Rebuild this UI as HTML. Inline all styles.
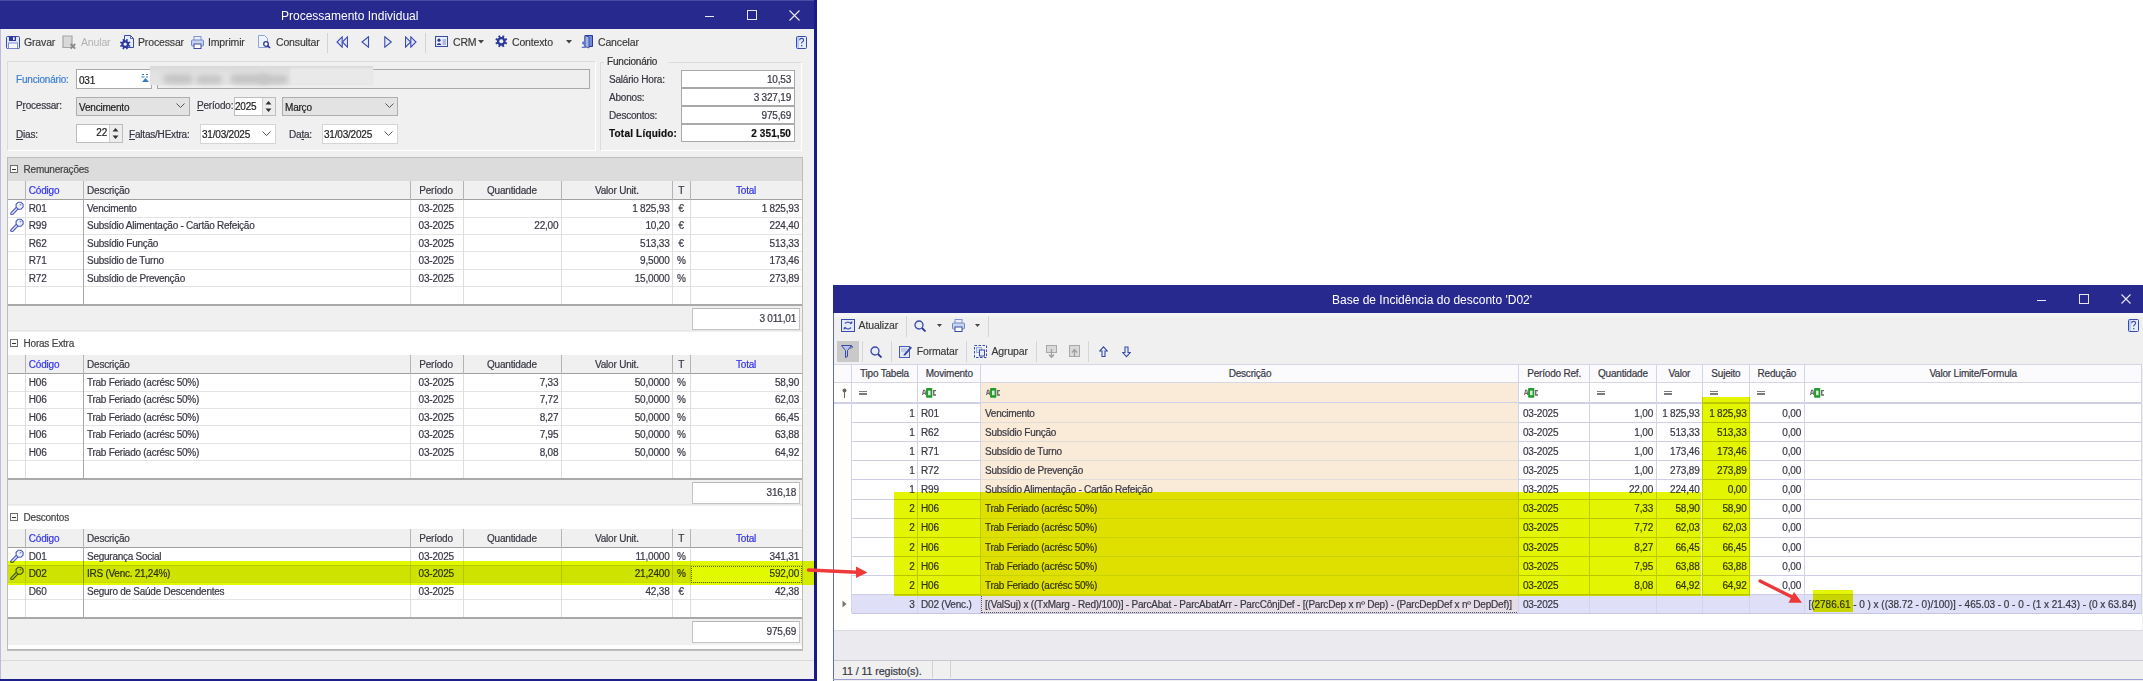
<!DOCTYPE html><html><head><meta charset="utf-8"><style>
html,body{margin:0;padding:0}
body{width:2143px;height:681px;overflow:hidden;background:#fff;position:relative;font-family:"Liberation Sans",sans-serif;}
div,span,svg{position:absolute;box-sizing:border-box}
.t{font-size:10px;letter-spacing:-0.2px;color:#383844;white-space:nowrap;line-height:12px;-webkit-text-stroke-width:0.2px}
.tb{font-size:10.5px;letter-spacing:-0.15px;color:#383838;white-space:nowrap;line-height:12px;-webkit-text-stroke-width:0.15px}
.r{text-align:right}
.c{text-align:center}
.ttl{font-size:12px;color:#fff;white-space:nowrap;line-height:14px}
</style></head><body><div style="left:0px;top:0px;width:817px;height:681px;background:#f0f0f0"></div>
<div style="left:0px;top:29px;width:1px;height:652px;background:#bcbce0"></div>
<div style="left:814px;top:0px;width:3px;height:681px;background:#1a1a8a"></div>
<div style="left:0px;top:679px;width:817px;height:2px;background:#1f1f8c"></div>
<div style="left:0px;top:0px;width:814px;height:29px;background:#28298f"></div>
<div style="left:0px;top:0px;width:814px;height:1px;background:#4b4ca6"></div>
<span class="ttl" style="left:281px;top:8.84px;">Processamento Individual</span>
<div style="left:705px;top:16px;width:9px;height:1px;background:#e8e8f5"></div>
<div style="left:747px;top:10px;width:10px;height:10px;border:1px solid #e8e8f5"></div>
<svg style="left:789px;top:10px" width="11" height="11" viewBox="0 0 11 11"><path d="M0.5 0.5L10.5 10.5M10.5 0.5L0.5 10.5" stroke="#ececf7" stroke-width="1.1"/></svg>
<svg style="left:6px;top:36px" width="14" height="13" viewBox="0 0 14 13"><rect x="0.5" y="0.5" width="13" height="12" rx="1" fill="#dfe8f7" stroke="#3a4aa8"/><rect x="3" y="0.5" width="7" height="4.5" fill="#2b3a9a"/><rect x="7" y="1.3" width="1.6" height="2.6" fill="#fff"/><rect x="2.5" y="7" width="9" height="5.5" fill="#f5f8ff" stroke="#6a7cc8" stroke-width="0.8"/></svg>
<span class="tb" style="left:24px;top:35.86px;">Gravar</span>
<svg style="left:62px;top:35px" width="14" height="15" viewBox="0 0 14 15"><path d="M1 1h9v11.5H1z" fill="#d8d8d8" stroke="#a6a6a6" stroke-width="1.2"/><path d="M8.6 9L13.2 13.6M13.2 9L8.6 13.6" stroke="#8a8a8a" stroke-width="1.8"/></svg>
<span class="tb" style="left:81px;top:35.86px;color:#b2b2b2;-webkit-text-stroke-width:0">Anular</span>
<svg style="left:120px;top:35px" width="15" height="15" viewBox="0 0 15 15"><path d="M4.5 0.5h6l3 3v9h-9z" fill="#e9eefb" stroke="#3a4aa8" stroke-width="1"/><path d="M10.5 0.5v3h3" fill="none" stroke="#3a4aa8" stroke-width="0.8"/><path d="M9.04 9.89L10.45 10.46L9.80 12.02L8.40 11.43L7.43 12.40L8.02 13.80L6.46 14.45L5.89 13.04L4.51 13.04L3.94 14.45L2.38 13.80L2.97 12.40L2.00 11.43L0.60 12.02L-0.05 10.46L1.36 9.89L1.36 8.51L-0.05 7.94L0.60 6.38L2.00 6.97L2.97 6.00L2.38 4.60L3.94 3.95L4.51 5.36L5.89 5.36L6.46 3.95L8.02 4.60L7.43 6.00L8.40 6.97L9.80 6.38L10.45 7.94L9.04 8.51Z" fill="#2b3a9a"/><circle cx="5.2" cy="9.2" r="1.6" fill="#e9eefb"/></svg>
<span class="tb" style="left:138px;top:35.86px;">Processar</span>
<svg style="left:191px;top:36px" width="13" height="13" viewBox="0 0 13 13"><rect x="3" y="0.5" width="7" height="4" fill="#e8eefa" stroke="#8094d0"/><rect x="0.5" y="4" width="12" height="6" rx="1" fill="#c6d4f0" stroke="#7088c8"/><rect x="3" y="8" width="7" height="4.5" fill="#fff" stroke="#3a4aa8"/></svg>
<span class="tb" style="left:208px;top:35.86px;">Imprimir</span>
<svg style="left:258px;top:35px" width="13" height="14" viewBox="0 0 13 14"><path d="M0.5 0.5h6l3 3v9h-9z" fill="#eef3fc" stroke="#8ea4d8"/><circle cx="8" cy="9" r="2.3" fill="#fff" stroke="#2b3a9a" stroke-width="1.3"/><path d="M9.6 10.6L12 13" stroke="#2b3a9a" stroke-width="1.6"/></svg>
<span class="tb" style="left:276px;top:35.86px;">Consultar</span>
<div style="left:327px;top:33px;width:1px;height:20px;background:#d3d3d3"></div>
<svg style="left:336px;top:36px" width="12" height="12" viewBox="0 0 12 12"><path d="M6.2 0.8L1 6L6.2 11.2Z" fill="#dfe5f7" stroke="#3b4bb0" stroke-width="1.1"/><path d="M11.5 0.8L6.3 6L11.5 11.2Z" fill="#dfe5f7" stroke="#3b4bb0" stroke-width="1.1"/></svg>
<svg style="left:361px;top:36px" width="9" height="12" viewBox="0 0 9 12"><path d="M7.5 0.8L1 6L7.5 11.2Z" fill="#e6ebf8" stroke="#3b4bb0" stroke-width="1.1"/></svg>
<svg style="left:384px;top:36px" width="9" height="12" viewBox="0 0 9 12"><path d="M0.8 0.8L7.3 6L0.8 11.2Z" fill="#e6ebf8" stroke="#3b4bb0" stroke-width="1.1"/></svg>
<svg style="left:405px;top:36px" width="12" height="12" viewBox="0 0 12 12"><path d="M0.5 0.8L5.7 6L0.5 11.2Z" fill="#dfe5f7" stroke="#3b4bb0" stroke-width="1.1"/><path d="M5.8 0.8L11 6L5.8 11.2Z" fill="#dfe5f7" stroke="#3b4bb0" stroke-width="1.1"/></svg>
<div style="left:425px;top:33px;width:1px;height:20px;background:#d3d3d3"></div>
<svg style="left:435px;top:36px" width="13" height="12" viewBox="0 0 13 12"><rect x="0.5" y="0.5" width="12" height="10" fill="#e9eefa" stroke="#3a4aa8"/><circle cx="4" cy="4.2" r="1.6" fill="#2b3a9a"/><path d="M1.8 9c0.5-2.2 4-2.2 4.5 0z" fill="#2b3a9a"/><path d="M7.5 4h3.5M7.5 6h3.5M7.5 8h3.5" stroke="#6a7cc8" stroke-width="0.9"/></svg>
<span class="tb" style="left:453px;top:35.86px;">CRM</span>
<svg style="left:478px;top:40px" width="6" height="4" viewBox="0 0 6 4"><path d="M0 0h6L3 3.5z" fill="#444"/></svg>
<svg style="left:495px;top:35px" width="13" height="13" viewBox="0 0 13 13"><path d="M10.63 7.07L12.23 7.72L11.50 9.49L9.91 8.82L8.82 9.91L9.49 11.50L7.72 12.23L7.07 10.63L5.53 10.63L4.88 12.23L3.11 11.50L3.78 9.91L2.69 8.82L1.10 9.49L0.37 7.72L1.97 7.07L1.97 5.53L0.37 4.88L1.10 3.11L2.69 3.78L3.78 2.69L3.11 1.10L4.88 0.37L5.53 1.97L7.07 1.97L7.72 0.37L9.49 1.10L8.82 2.69L9.91 3.78L11.50 3.11L12.23 4.88L10.63 5.53Z" fill="#2b3a9a"/><circle cx="6.3" cy="6.3" r="2" fill="#f0f0f0"/></svg>
<span class="tb" style="left:512px;top:35.86px;">Contexto</span>
<svg style="left:566px;top:40px" width="6" height="4" viewBox="0 0 6 4"><path d="M0 0h6L3 3.5z" fill="#444"/></svg>
<svg style="left:581px;top:35px" width="12" height="14" viewBox="0 0 12 14"><path d="M4 0.5h7.5v11h-7.5z" fill="#6f8ad6" stroke="#2b3a9a"/><path d="M4 0.5l4 1.5v11l-4-1.5z" fill="#9fb3e8" stroke="#2b3a9a" stroke-width="0.8"/><circle cx="2.8" cy="8" r="1.8" fill="#5d78c8"/><path d="M0.5 13c0-2 4.5-2 4.5 0z" fill="#5d78c8"/></svg>
<span class="tb" style="left:598px;top:35.86px;">Cancelar</span>
<svg style="left:796px;top:36px" width="11" height="13" viewBox="0 0 11 13"><rect x="0.5" y="0.5" width="10" height="12" rx="1" fill="#e6ecfa" stroke="#3a4aa8"/><rect x="1" y="1" width="2" height="11" fill="#b9c9ee"/><path d="M3.6 4.2c0-2.4 4-2.4 4 0c0 1.4-2 1.4-2 3.2" fill="none" stroke="#3a4aa8" stroke-width="1.1"/><rect x="5.1" y="9" width="1.2" height="1.3" fill="#3a4aa8"/></svg>
<div style="left:7px;top:61px;width:589px;height:90px;border:1px solid #dcdcdc;border-right-color:#fff;border-bottom-color:#fff"></div>
<span class="t" style="left:16px;top:73.93px;color:#3d7fd6">Funcionário:</span>
<div style="left:76px;top:69px;width:76px;height:20px;background:#fff;border:1px solid #a9a9a9"></div>
<span class="t" style="left:79px;top:74.83px;color:#222">031</span>
<svg style="left:141px;top:74px" width="8" height="9" viewBox="0 0 8 9"><path d="M1 0.5h2M0.5 3h3M5 0.5h2M5 3h2" stroke="#3a78c8" stroke-width="1"/><path d="M1 8h7L4.5 4z" fill="#3a78c8"/></svg>
<div style="left:157px;top:69px;width:433px;height:20px;background:#eeeeee;border:1px solid #a9a9a9"></div>
<div style="left:150px;top:66px;width:223px;height:19px;background:linear-gradient(180deg,#d9d9d9 0%,#e2e2e2 40%,#e4e4e4 100%);filter:blur(0.6px)"></div>
<div style="left:290px;top:68px;width:83px;height:17px;background:#e9e9e9;filter:blur(1px)"></div>
<div style="left:163px;top:74px;width:30px;height:10px;background:#c6c6c6;border-radius:5px;filter:blur(2.5px)"></div>
<div style="left:196px;top:75px;width:26px;height:9px;background:#c6c6c6;border-radius:5px;filter:blur(2.5px)"></div>
<div style="left:230px;top:74px;width:40px;height:10px;background:#c6c6c6;border-radius:5px;filter:blur(2.5px)"></div>
<div style="left:258px;top:75px;width:30px;height:9px;background:#c6c6c6;border-radius:5px;filter:blur(2.5px)"></div>
<span class="t" style="left:16px;top:100.03px;">P<u>r</u>ocessar:</span>
<div style="left:76px;top:97px;width:114px;height:19px;background:#e3e3e3;border:1px solid #aeaeae"></div>
<span class="t" style="left:79px;top:102.13px;color:#222">Vencimento</span>
<svg style="left:176px;top:103px" width="9" height="6" viewBox="0 0 9 6"><path d="M0.5 0.5L4.5 4.5L8.5 0.5" fill="none" stroke="#555" stroke-width="1"/></svg>
<span class="t" style="left:197px;top:100.03px;"><u>P</u>eríodo:</span>
<div style="left:234px;top:97px;width:42px;height:19px;background:#fff;border:1px solid #bdbdbd"></div>
<span class="t" style="left:235px;top:100.73px;color:#222">2025</span>
<div style="left:262px;top:98px;width:13px;height:17px;background:#ededed;border-left:1px solid #cfcfcf"></div>
<svg style="left:265px;top:100px" width="7" height="13" viewBox="0 0 7 13"><path d="M0.5 4.5h6L3.5 1z M0.5 8.5h6L3.5 12z" fill="#333"/></svg>
<div style="left:282px;top:97px;width:116px;height:19px;background:#e3e3e3;border:1px solid #aeaeae"></div>
<span class="t" style="left:285px;top:102.13px;color:#222">Março</span>
<svg style="left:385px;top:103px" width="9" height="6" viewBox="0 0 9 6"><path d="M0.5 0.5L4.5 4.5L8.5 0.5" fill="none" stroke="#555" stroke-width="1"/></svg>
<span class="t" style="left:16px;top:129.03px;"><u>D</u>ias:</span>
<div style="left:76px;top:124px;width:47px;height:19px;background:#fff;border:1px solid #bdbdbd"></div>
<span class="t r" style="right:2036px;top:127.33px;color:#222">22</span>
<div style="left:109px;top:125px;width:13px;height:17px;background:#ededed;border-left:1px solid #cfcfcf"></div>
<svg style="left:112px;top:127px" width="7" height="13" viewBox="0 0 7 13"><path d="M0.5 4.5h6L3.5 1z M0.5 8.5h6L3.5 12z" fill="#333"/></svg>
<span class="t" style="left:129px;top:129.03px;"><u>F</u>altas/HExtra:</span>
<div style="left:200px;top:124px;width:76px;height:20px;background:#fff;border:1px solid #d5d5d5"></div>
<span class="t" style="left:202px;top:129.03px;color:#222">31/03/2025</span>
<svg style="left:262px;top:131px" width="9" height="6" viewBox="0 0 9 6"><path d="M0.5 0.5L4.5 4.5L8.5 0.5" fill="none" stroke="#555" stroke-width="1"/></svg>
<span class="t" style="left:289px;top:129.03px;">Da<u>t</u>a:</span>
<div style="left:322px;top:124px;width:76px;height:20px;background:#fff;border:1px solid #d5d5d5"></div>
<span class="t" style="left:324px;top:129.03px;color:#222">31/03/2025</span>
<svg style="left:384px;top:131px" width="9" height="6" viewBox="0 0 9 6"><path d="M0.5 0.5L4.5 4.5L8.5 0.5" fill="none" stroke="#555" stroke-width="1"/></svg>
<div style="left:600px;top:62px;width:202px;height:89px;border:1px solid #dcdcdc;border-right-color:#fff;border-bottom-color:#fff"></div>
<div style="left:604px;top:56px;width:64px;height:10px;background:#f0f0f0"></div>
<span class="t" style="left:607px;top:55.53px;color:#333">Funcionário</span>
<div style="left:681px;top:70px;width:114px;height:18px;background:#fff;border:1px solid #a9a9a9"></div>
<span class="t" style="left:609px;top:73.93px;">Salário Hora:</span>
<span class="t r" style="right:1352px;top:73.93px;">10,53</span>
<div style="left:681px;top:88px;width:114px;height:18px;background:#fff;border:1px solid #a9a9a9"></div>
<span class="t" style="left:609px;top:92.03px;">Abonos:</span>
<span class="t r" style="right:1352px;top:92.03px;">3 327,19</span>
<div style="left:681px;top:106px;width:114px;height:18px;background:#fff;border:1px solid #a9a9a9"></div>
<span class="t" style="left:609px;top:110.13px;">Descontos:</span>
<span class="t r" style="right:1352px;top:110.13px;">975,69</span>
<div style="left:681px;top:124px;width:114px;height:18px;background:#fff;border:1px solid #a9a9a9"></div>
<span class="t" style="left:609px;top:128.23px;font-weight:bold;color:#111;letter-spacing:0.2px">Total Líquido:</span>
<span class="t r" style="right:1352px;top:128.23px;font-weight:bold;color:#111;letter-spacing:0.1px">2 351,50</span>
<div style="left:7px;top:157px;width:796px;height:494px;background:#f0f0f0;border:1px solid #bdbdbd"></div>
<div style="left:8px;top:158px;width:794px;height:23px;background:#dcdcdc"></div>
<div style="left:10px;top:165px;width:8px;height:8px;border:1px solid #6e6e6e;background:#f8f8f8"></div>
<div style="left:12px;top:168.5px;width:4px;height:1px;background:#333"></div>
<span class="t" style="left:23.5px;top:164.23px;color:#444">Remunerações</span>
<div style="left:8px;top:181px;width:794px;height:18.5px;background:#f0f0f0;border-bottom:1px solid #a0a0a0"></div>
<div style="left:25px;top:181px;width:1px;height:18.5px;background:#b4b4b4"></div>
<div style="left:83px;top:181px;width:1px;height:18.5px;background:#b4b4b4"></div>
<div style="left:409.5px;top:181px;width:1px;height:18.5px;background:#b4b4b4"></div>
<div style="left:462.5px;top:181px;width:1px;height:18.5px;background:#b4b4b4"></div>
<div style="left:561.3px;top:181px;width:1px;height:18.5px;background:#b4b4b4"></div>
<div style="left:672.4px;top:181px;width:1px;height:18.5px;background:#b4b4b4"></div>
<div style="left:690.2px;top:181px;width:1px;height:18.5px;background:#b4b4b4"></div>
<span class="t" style="left:28.8px;top:184.83px;color:#3333ee">Código</span>
<span class="t" style="left:87px;top:184.83px;">Descrição</span>
<span class="t c" style="left:409.5px;width:53.0px;top:184.83px;">Período</span>
<span class="t c" style="left:462.5px;width:98.79999999999995px;top:184.83px;">Quantidade</span>
<span class="t c" style="left:561.3px;width:111.10000000000002px;top:184.83px;">Valor Unit.</span>
<span class="t c" style="left:672.4px;width:17.800000000000068px;top:184.83px;">T</span>
<span class="t c" style="left:690.2px;width:111.79999999999995px;top:184.83px;color:#3333ee">Total</span>
<div style="left:8px;top:199.5px;width:794px;height:104.39999999999999px;background:#fff"></div>
<div style="left:8px;top:217px;width:794px;height:1px;background:#e3e3e3"></div>
<div style="left:8px;top:234px;width:794px;height:1px;background:#e3e3e3"></div>
<div style="left:8px;top:251px;width:794px;height:1px;background:#e3e3e3"></div>
<div style="left:8px;top:269px;width:794px;height:1px;background:#e3e3e3"></div>
<div style="left:8px;top:286px;width:794px;height:1px;background:#e3e3e3"></div>
<div style="left:25px;top:199.5px;width:1px;height:104.39999999999999px;background:#dedede"></div>
<div style="left:83px;top:199.5px;width:1px;height:104.39999999999999px;background:#a8a8a8"></div>
<div style="left:409.5px;top:199.5px;width:1px;height:104.39999999999999px;background:#dedede"></div>
<div style="left:462.5px;top:199.5px;width:1px;height:104.39999999999999px;background:#dedede"></div>
<div style="left:561.3px;top:199.5px;width:1px;height:104.39999999999999px;background:#dedede"></div>
<div style="left:672.4px;top:199.5px;width:1px;height:104.39999999999999px;background:#dedede"></div>
<div style="left:690.2px;top:199.5px;width:1px;height:104.39999999999999px;background:#dedede"></div>
<svg style="left:10px;top:201px" width="14" height="14" viewBox="0 0 14 14"><path d="M6.8 7.6L2 12.4" stroke="#4a58bf" stroke-width="3.6" stroke-linecap="round"/><path d="M6.8 7.6L2 12.4" stroke="#dfe5f7" stroke-width="1.4" stroke-linecap="round"/><path d="M8.2 1.2h2.8l2.1 2.1v2.8l-2.1 2.1h-2.8l-2.1-2.1v-2.8z" fill="#eef1fb" stroke="#4a58bf" stroke-width="1.1"/><circle cx="10.5" cy="3.6" r="0.9" fill="#7d8bd6"/></svg>
<span class="t" style="left:28.8px;top:203.03px;">R01</span>
<span class="t" style="left:87px;top:203.03px;letter-spacing:-0.26px">Vencimento</span>
<span class="t" style="left:418.6px;top:203.03px;">03-2025</span>
<span class="t r" style="right:1473.5px;top:203.03px;">1 825,93</span>
<span class="t c" style="left:672.4px;width:17.800000000000068px;top:203.03px;">€</span>
<span class="t r" style="right:1344px;top:203.03px;">1 825,93</span>
<svg style="left:10px;top:218px" width="14" height="14" viewBox="0 0 14 14"><path d="M6.8 7.6L2 12.4" stroke="#4a58bf" stroke-width="3.6" stroke-linecap="round"/><path d="M6.8 7.6L2 12.4" stroke="#dfe5f7" stroke-width="1.4" stroke-linecap="round"/><path d="M8.2 1.2h2.8l2.1 2.1v2.8l-2.1 2.1h-2.8l-2.1-2.1v-2.8z" fill="#eef1fb" stroke="#4a58bf" stroke-width="1.1"/><circle cx="10.5" cy="3.6" r="0.9" fill="#7d8bd6"/></svg>
<span class="t" style="left:28.8px;top:220.43px;">R99</span>
<span class="t" style="left:87px;top:220.43px;letter-spacing:-0.26px">Subsídio Alimentação - Cartão Refeição</span>
<span class="t" style="left:418.6px;top:220.43px;">03-2025</span>
<span class="t r" style="right:1584.7px;top:220.43px;">22,00</span>
<span class="t r" style="right:1473.5px;top:220.43px;">10,20</span>
<span class="t c" style="left:672.4px;width:17.800000000000068px;top:220.43px;">€</span>
<span class="t r" style="right:1344px;top:220.43px;">224,40</span>
<span class="t" style="left:28.8px;top:237.83px;">R62</span>
<span class="t" style="left:87px;top:237.83px;letter-spacing:-0.26px">Subsídio Função</span>
<span class="t" style="left:418.6px;top:237.83px;">03-2025</span>
<span class="t r" style="right:1473.5px;top:237.83px;">513,33</span>
<span class="t c" style="left:672.4px;width:17.800000000000068px;top:237.83px;">€</span>
<span class="t r" style="right:1344px;top:237.83px;">513,33</span>
<span class="t" style="left:28.8px;top:255.23px;">R71</span>
<span class="t" style="left:87px;top:255.23px;letter-spacing:-0.26px">Subsídio de Turno</span>
<span class="t" style="left:418.6px;top:255.23px;">03-2025</span>
<span class="t r" style="right:1473.5px;top:255.23px;">9,5000</span>
<span class="t c" style="left:672.4px;width:17.800000000000068px;top:255.23px;">%</span>
<span class="t r" style="right:1344px;top:255.23px;">173,46</span>
<span class="t" style="left:28.8px;top:272.63px;">R72</span>
<span class="t" style="left:87px;top:272.63px;letter-spacing:-0.26px">Subsídio de Prevenção</span>
<span class="t" style="left:418.6px;top:272.63px;">03-2025</span>
<span class="t r" style="right:1473.5px;top:272.63px;">15,0000</span>
<span class="t c" style="left:672.4px;width:17.800000000000068px;top:272.63px;">%</span>
<span class="t r" style="right:1344px;top:272.63px;">273,89</span>
<div style="left:8px;top:304px;width:794px;height:2px;background:#a9a9a9"></div>
<div style="left:692px;top:307.9px;width:108px;height:22px;background:#fff;border:1px solid #c4c4c4;border-top-color:#b8b8b8"></div>
<span class="t r" style="right:1347px;top:312.93px;">3 011,01</span>
<div style="left:8px;top:330px;width:794px;height:1px;background:#e6e6e6"></div>
<div style="left:8px;top:332px;width:794px;height:23px;background:#ffffff"></div>
<div style="left:10px;top:339px;width:8px;height:8px;border:1px solid #6e6e6e;background:#f8f8f8"></div>
<div style="left:12px;top:342.5px;width:4px;height:1px;background:#333"></div>
<span class="t" style="left:23.5px;top:338.23px;color:#444">Horas Extra</span>
<div style="left:8px;top:355px;width:794px;height:18.5px;background:#f0f0f0;border-bottom:1px solid #a0a0a0"></div>
<div style="left:25px;top:355px;width:1px;height:18.5px;background:#b4b4b4"></div>
<div style="left:83px;top:355px;width:1px;height:18.5px;background:#b4b4b4"></div>
<div style="left:409.5px;top:355px;width:1px;height:18.5px;background:#b4b4b4"></div>
<div style="left:462.5px;top:355px;width:1px;height:18.5px;background:#b4b4b4"></div>
<div style="left:561.3px;top:355px;width:1px;height:18.5px;background:#b4b4b4"></div>
<div style="left:672.4px;top:355px;width:1px;height:18.5px;background:#b4b4b4"></div>
<div style="left:690.2px;top:355px;width:1px;height:18.5px;background:#b4b4b4"></div>
<span class="t" style="left:28.8px;top:358.83px;color:#3333ee">Código</span>
<span class="t" style="left:87px;top:358.83px;">Descrição</span>
<span class="t c" style="left:409.5px;width:53.0px;top:358.83px;">Período</span>
<span class="t c" style="left:462.5px;width:98.79999999999995px;top:358.83px;">Quantidade</span>
<span class="t c" style="left:561.3px;width:111.10000000000002px;top:358.83px;">Valor Unit.</span>
<span class="t c" style="left:672.4px;width:17.800000000000068px;top:358.83px;">T</span>
<span class="t c" style="left:690.2px;width:111.79999999999995px;top:358.83px;color:#3333ee">Total</span>
<div style="left:8px;top:373.5px;width:794px;height:104.39999999999999px;background:#fff"></div>
<div style="left:8px;top:391px;width:794px;height:1px;background:#e3e3e3"></div>
<div style="left:8px;top:408px;width:794px;height:1px;background:#e3e3e3"></div>
<div style="left:8px;top:425px;width:794px;height:1px;background:#e3e3e3"></div>
<div style="left:8px;top:443px;width:794px;height:1px;background:#e3e3e3"></div>
<div style="left:8px;top:460px;width:794px;height:1px;background:#e3e3e3"></div>
<div style="left:25px;top:373.5px;width:1px;height:104.39999999999999px;background:#dedede"></div>
<div style="left:83px;top:373.5px;width:1px;height:104.39999999999999px;background:#a8a8a8"></div>
<div style="left:409.5px;top:373.5px;width:1px;height:104.39999999999999px;background:#dedede"></div>
<div style="left:462.5px;top:373.5px;width:1px;height:104.39999999999999px;background:#dedede"></div>
<div style="left:561.3px;top:373.5px;width:1px;height:104.39999999999999px;background:#dedede"></div>
<div style="left:672.4px;top:373.5px;width:1px;height:104.39999999999999px;background:#dedede"></div>
<div style="left:690.2px;top:373.5px;width:1px;height:104.39999999999999px;background:#dedede"></div>
<span class="t" style="left:28.8px;top:377.03px;">H06</span>
<span class="t" style="left:87px;top:377.03px;letter-spacing:-0.26px">Trab Feriado (acrésc 50%)</span>
<span class="t" style="left:418.6px;top:377.03px;">03-2025</span>
<span class="t r" style="right:1584.7px;top:377.03px;">7,33</span>
<span class="t r" style="right:1473.5px;top:377.03px;">50,0000</span>
<span class="t c" style="left:672.4px;width:17.800000000000068px;top:377.03px;">%</span>
<span class="t r" style="right:1344px;top:377.03px;">58,90</span>
<span class="t" style="left:28.8px;top:394.43px;">H06</span>
<span class="t" style="left:87px;top:394.43px;letter-spacing:-0.26px">Trab Feriado (acrésc 50%)</span>
<span class="t" style="left:418.6px;top:394.43px;">03-2025</span>
<span class="t r" style="right:1584.7px;top:394.43px;">7,72</span>
<span class="t r" style="right:1473.5px;top:394.43px;">50,0000</span>
<span class="t c" style="left:672.4px;width:17.800000000000068px;top:394.43px;">%</span>
<span class="t r" style="right:1344px;top:394.43px;">62,03</span>
<span class="t" style="left:28.8px;top:411.83px;">H06</span>
<span class="t" style="left:87px;top:411.83px;letter-spacing:-0.26px">Trab Feriado (acrésc 50%)</span>
<span class="t" style="left:418.6px;top:411.83px;">03-2025</span>
<span class="t r" style="right:1584.7px;top:411.83px;">8,27</span>
<span class="t r" style="right:1473.5px;top:411.83px;">50,0000</span>
<span class="t c" style="left:672.4px;width:17.800000000000068px;top:411.83px;">%</span>
<span class="t r" style="right:1344px;top:411.83px;">66,45</span>
<span class="t" style="left:28.8px;top:429.23px;">H06</span>
<span class="t" style="left:87px;top:429.23px;letter-spacing:-0.26px">Trab Feriado (acrésc 50%)</span>
<span class="t" style="left:418.6px;top:429.23px;">03-2025</span>
<span class="t r" style="right:1584.7px;top:429.23px;">7,95</span>
<span class="t r" style="right:1473.5px;top:429.23px;">50,0000</span>
<span class="t c" style="left:672.4px;width:17.800000000000068px;top:429.23px;">%</span>
<span class="t r" style="right:1344px;top:429.23px;">63,88</span>
<span class="t" style="left:28.8px;top:446.63px;">H06</span>
<span class="t" style="left:87px;top:446.63px;letter-spacing:-0.26px">Trab Feriado (acrésc 50%)</span>
<span class="t" style="left:418.6px;top:446.63px;">03-2025</span>
<span class="t r" style="right:1584.7px;top:446.63px;">8,08</span>
<span class="t r" style="right:1473.5px;top:446.63px;">50,0000</span>
<span class="t c" style="left:672.4px;width:17.800000000000068px;top:446.63px;">%</span>
<span class="t r" style="right:1344px;top:446.63px;">64,92</span>
<div style="left:8px;top:478px;width:794px;height:2px;background:#a9a9a9"></div>
<div style="left:692px;top:481.9px;width:108px;height:22px;background:#fff;border:1px solid #c4c4c4;border-top-color:#b8b8b8"></div>
<span class="t r" style="right:1347px;top:486.93px;">316,18</span>
<div style="left:8px;top:504px;width:794px;height:1px;background:#e6e6e6"></div>
<div style="left:8px;top:506px;width:794px;height:23px;background:#ffffff"></div>
<div style="left:10px;top:513px;width:8px;height:8px;border:1px solid #6e6e6e;background:#f8f8f8"></div>
<div style="left:12px;top:516.5px;width:4px;height:1px;background:#333"></div>
<span class="t" style="left:23.5px;top:512.23px;color:#444">Descontos</span>
<div style="left:8px;top:529px;width:794px;height:18.5px;background:#f0f0f0;border-bottom:1px solid #a0a0a0"></div>
<div style="left:25px;top:529px;width:1px;height:18.5px;background:#b4b4b4"></div>
<div style="left:83px;top:529px;width:1px;height:18.5px;background:#b4b4b4"></div>
<div style="left:409.5px;top:529px;width:1px;height:18.5px;background:#b4b4b4"></div>
<div style="left:462.5px;top:529px;width:1px;height:18.5px;background:#b4b4b4"></div>
<div style="left:561.3px;top:529px;width:1px;height:18.5px;background:#b4b4b4"></div>
<div style="left:672.4px;top:529px;width:1px;height:18.5px;background:#b4b4b4"></div>
<div style="left:690.2px;top:529px;width:1px;height:18.5px;background:#b4b4b4"></div>
<span class="t" style="left:28.8px;top:532.83px;color:#3333ee">Código</span>
<span class="t" style="left:87px;top:532.83px;">Descrição</span>
<span class="t c" style="left:409.5px;width:53.0px;top:532.83px;">Período</span>
<span class="t c" style="left:462.5px;width:98.79999999999995px;top:532.83px;">Quantidade</span>
<span class="t c" style="left:561.3px;width:111.10000000000002px;top:532.83px;">Valor Unit.</span>
<span class="t c" style="left:672.4px;width:17.800000000000068px;top:532.83px;">T</span>
<span class="t c" style="left:690.2px;width:111.79999999999995px;top:532.83px;color:#3333ee">Total</span>
<div style="left:8px;top:547.5px;width:794px;height:69.6px;background:#fff"></div>
<div style="left:8px;top:565px;width:794px;height:1px;background:#e3e3e3"></div>
<div style="left:8px;top:582px;width:794px;height:1px;background:#e3e3e3"></div>
<div style="left:8px;top:599px;width:794px;height:1px;background:#e3e3e3"></div>
<div style="left:25px;top:547.5px;width:1px;height:69.6px;background:#dedede"></div>
<div style="left:83px;top:547.5px;width:1px;height:69.6px;background:#a8a8a8"></div>
<div style="left:409.5px;top:547.5px;width:1px;height:69.6px;background:#dedede"></div>
<div style="left:462.5px;top:547.5px;width:1px;height:69.6px;background:#dedede"></div>
<div style="left:561.3px;top:547.5px;width:1px;height:69.6px;background:#dedede"></div>
<div style="left:672.4px;top:547.5px;width:1px;height:69.6px;background:#dedede"></div>
<div style="left:690.2px;top:547.5px;width:1px;height:69.6px;background:#dedede"></div>
<svg style="left:10px;top:549px" width="14" height="14" viewBox="0 0 14 14"><path d="M6.8 7.6L2 12.4" stroke="#4a58bf" stroke-width="3.6" stroke-linecap="round"/><path d="M6.8 7.6L2 12.4" stroke="#dfe5f7" stroke-width="1.4" stroke-linecap="round"/><path d="M8.2 1.2h2.8l2.1 2.1v2.8l-2.1 2.1h-2.8l-2.1-2.1v-2.8z" fill="#eef1fb" stroke="#4a58bf" stroke-width="1.1"/><circle cx="10.5" cy="3.6" r="0.9" fill="#7d8bd6"/></svg>
<span class="t" style="left:28.8px;top:551.03px;">D01</span>
<span class="t" style="left:87px;top:551.03px;letter-spacing:-0.26px">Segurança Social</span>
<span class="t" style="left:418.6px;top:551.03px;">03-2025</span>
<span class="t r" style="right:1473.5px;top:551.03px;">11,0000</span>
<span class="t c" style="left:672.4px;width:17.800000000000068px;top:551.03px;">%</span>
<span class="t r" style="right:1344px;top:551.03px;">341,31</span>
<svg style="left:10px;top:566px" width="14" height="14" viewBox="0 0 14 14"><path d="M6.8 7.6L2 12.4" stroke="#4a58bf" stroke-width="3.6" stroke-linecap="round"/><path d="M6.8 7.6L2 12.4" stroke="#dfe5f7" stroke-width="1.4" stroke-linecap="round"/><path d="M8.2 1.2h2.8l2.1 2.1v2.8l-2.1 2.1h-2.8l-2.1-2.1v-2.8z" fill="#eef1fb" stroke="#4a58bf" stroke-width="1.1"/><circle cx="10.5" cy="3.6" r="0.9" fill="#7d8bd6"/></svg>
<span class="t" style="left:28.8px;top:568.43px;">D02</span>
<span class="t" style="left:87px;top:568.43px;letter-spacing:-0.26px">IRS (Venc. 21,24%)</span>
<span class="t" style="left:418.6px;top:568.43px;">03-2025</span>
<span class="t r" style="right:1473.5px;top:568.43px;">21,2400</span>
<span class="t c" style="left:672.4px;width:17.800000000000068px;top:568.43px;">%</span>
<span class="t r" style="right:1344px;top:568.43px;">592,00</span>
<span class="t" style="left:28.8px;top:585.83px;">D60</span>
<span class="t" style="left:87px;top:585.83px;letter-spacing:-0.26px">Seguro de Saúde Descendentes</span>
<span class="t" style="left:418.6px;top:585.83px;">03-2025</span>
<span class="t r" style="right:1473.5px;top:585.83px;">42,38</span>
<span class="t c" style="left:672.4px;width:17.800000000000068px;top:585.83px;">€</span>
<span class="t r" style="right:1344px;top:585.83px;">42,38</span>
<div style="left:8px;top:617px;width:794px;height:2px;background:#a9a9a9"></div>
<div style="left:692px;top:621.1px;width:108px;height:22px;background:#fff;border:1px solid #c4c4c4;border-top-color:#b8b8b8"></div>
<span class="t r" style="right:1347px;top:626.13px;">975,69</span>
<div style="left:8px;top:645px;width:794px;height:5px;background:#fdfdfd;border-bottom:1px solid #b7b7b7"></div>
<div style="left:1px;top:660px;width:813px;height:1px;background:#dadada"></div>
<div style="left:8px;top:565px;width:683px;height:17px;background:#e9e9e9;mix-blend-mode:multiply"></div>
<div style="left:691px;top:565.5px;width:111px;height:17px;border:1px dotted #6a6a6a"></div>
<div style="left:8px;top:561px;width:807px;height:24px;background:rgb(226,250,0);mix-blend-mode:multiply"></div>
<div style="left:833px;top:285px;width:1310px;height:396px;background:#f0f0f0"></div>
<div style="left:833px;top:285px;width:1px;height:396px;background:#6767bd"></div>
<div style="left:833px;top:678.5px;width:1310px;height:1.5px;background:#9d9dd3"></div>
<div style="left:833px;top:285px;width:1310px;height:28px;background:#28298f"></div>
<span class="ttl" style="left:1332px;top:292.94px;">Base de Incidência do desconto 'D02'</span>
<div style="left:2037px;top:299.5px;width:9px;height:1px;background:#e8e8f5"></div>
<div style="left:2079px;top:294px;width:9.5px;height:9.5px;border:1px solid #e8e8f5"></div>
<svg style="left:2121px;top:294px" width="10" height="10" viewBox="0 0 10 10"><path d="M0.5 0.5L9.5 9.5M9.5 0.5L0.5 9.5" stroke="#ececf7" stroke-width="1.1"/></svg>
<div style="left:834px;top:313px;width:1309px;height:4px;background:#f5f5f5"></div>
<svg style="left:841px;top:319px" width="14" height="13" viewBox="0 0 14 13"><rect x="0.5" y="0.5" width="13" height="12" fill="#e4eaf8" stroke="#3a4aa8"/><path d="M4 4.5a3.5 3.5 0 0 1 6 0.5M10 8.5a3.5 3.5 0 0 1-6-0.5" fill="none" stroke="#4a5cb8" stroke-width="1.3"/><path d="M9 3l2 2.2 0.5-2.7zM5 10l-2-2.2-0.5 2.7z" fill="#3a4aa8"/></svg>
<span class="tb" style="left:858.6px;top:319.36px;">Atualizar</span>
<div style="left:906px;top:316px;width:1px;height:21px;background:#d6d6d6"></div>
<svg style="left:914px;top:320px" width="12" height="12" viewBox="0 0 12 12"><circle cx="5" cy="5" r="4" fill="#e8edf9" stroke="#3a4aa8" stroke-width="1.3"/><path d="M8 8L11.5 11.5" stroke="#2b3a9a" stroke-width="1.8"/></svg>
<svg style="left:937px;top:324px" width="5" height="4" viewBox="0 0 5 4"><path d="M0 0h5L2.5 3z" fill="#444"/></svg>
<svg style="left:952px;top:319px" width="13" height="13" viewBox="0 0 13 13"><rect x="3" y="0.5" width="7" height="4" fill="#e8eefa" stroke="#8094d0"/><rect x="0.5" y="4" width="12" height="6" rx="1" fill="#c6d4f0" stroke="#7088c8"/><rect x="3" y="8" width="7" height="4.5" fill="#fff" stroke="#3a4aa8"/></svg>
<svg style="left:975px;top:324px" width="5" height="4" viewBox="0 0 5 4"><path d="M0 0h5L2.5 3z" fill="#444"/></svg>
<div style="left:988px;top:316px;width:1px;height:21px;background:#d6d6d6"></div>
<svg style="left:2128px;top:319px" width="11" height="13" viewBox="0 0 11 13"><rect x="0.5" y="0.5" width="10" height="12" rx="1" fill="#e6ecfa" stroke="#3a4aa8"/><rect x="1" y="1" width="2" height="11" fill="#b9c9ee"/><path d="M3.6 4.2c0-2.4 4-2.4 4 0c0 1.4-2 1.4-2 3.2" fill="none" stroke="#3a4aa8" stroke-width="1.1"/><rect x="5.1" y="9" width="1.2" height="1.3" fill="#3a4aa8"/></svg>
<div style="left:836.5px;top:340.5px;width:22px;height:21px;background:#c9c9c9"></div>
<svg style="left:841px;top:345px" width="13" height="13" viewBox="0 0 13 13"><path d="M0.5 0.5h10L6.5 5.5v6l-2 1v-7z" fill="#b8c4ea" stroke="#3a4aa8" stroke-width="1"/><path d="M9 0.5l3 1.5-3 1.5" fill="none" stroke="#3a4aa8" stroke-width="0.8"/></svg>
<div style="left:862px;top:341px;width:1px;height:21px;background:#d6d6d6"></div>
<svg style="left:870px;top:346px" width="12" height="12" viewBox="0 0 12 12"><circle cx="5" cy="5" r="4" fill="#e8edf9" stroke="#3a4aa8" stroke-width="1.3"/><path d="M8 8L11.5 11.5" stroke="#2b3a9a" stroke-width="1.8"/></svg>
<div style="left:891px;top:341px;width:1px;height:21px;background:#d6d6d6"></div>
<svg style="left:899px;top:345px" width="13" height="13" viewBox="0 0 13 13"><rect x="0.5" y="1.5" width="10" height="11" fill="#e4eaf8" stroke="#4a5cb8"/><path d="M2 4h6M2 6h5" stroke="#8aa0dc" stroke-width="0.8"/><path d="M5 9l6.5-7.5 1.5 1.2-6.5 7.5-2 0.5z" fill="#3a4aa8"/></svg>
<span class="tb" style="left:916.7px;top:344.86px;">Formatar</span>
<div style="left:966px;top:341px;width:1px;height:21px;background:#d6d6d6"></div>
<svg style="left:974px;top:345px" width="13" height="13" viewBox="0 0 13 13"><rect x="0.5" y="0.5" width="12" height="12" fill="none" stroke="#3a4aa8" stroke-dasharray="2.5 1.5"/><rect x="2.5" y="2.5" width="5" height="5" fill="#d8e0f6" stroke="#8aa0dc" stroke-width="0.8"/><rect x="5.5" y="5" width="5" height="6" fill="#e8edf9" stroke="#3a4aa8"/></svg>
<span class="tb" style="left:991.5px;top:344.86px;">Agrupar</span>
<div style="left:1036px;top:341px;width:1px;height:21px;background:#d6d6d6"></div>
<svg style="left:1046px;top:345px" width="11" height="13" viewBox="0 0 11 13"><rect x="0.5" y="0.5" width="10" height="7" fill="#d9d9d9" stroke="#a8a8a8"/><path d="M5.5 4v8M3 9.5l2.5 3 2.5-3" fill="none" stroke="#a0a0a0" stroke-width="1.3"/></svg>
<svg style="left:1069px;top:345px" width="11" height="13" viewBox="0 0 11 13"><rect x="0.5" y="0.5" width="10" height="11" fill="#d9d9d9" stroke="#a8a8a8"/><path d="M5.5 12V5M3 7.5l2.5-3 2.5 3" fill="none" stroke="#a0a0a0" stroke-width="1.3"/></svg>
<div style="left:1088px;top:341px;width:1px;height:21px;background:#d6d6d6"></div>
<svg style="left:1098.5px;top:346px" width="9" height="12" viewBox="0 0 9 12"><path d="M4.5 0.8L0.8 5h2.2v5.5h3V5h2.2z" fill="#e8edf9" stroke="#3a4aa8" stroke-width="1.1"/></svg>
<svg style="left:1121.5px;top:346px" width="9" height="12" viewBox="0 0 9 12"><path d="M4.5 10.7L0.8 6.5h2.2V1h3v5.5h2.2z" fill="#e8edf9" stroke="#3a4aa8" stroke-width="1.1"/></svg>
<div style="left:834px;top:364px;width:1308px;height:266px;background:#fff"></div>
<div style="left:834px;top:364px;width:1308px;height:18.5px;background:#fbfbfe;border-top:1.5px solid #d6d6e4;border-bottom:1px solid #d6d6e6"></div>
<span class="t c" style="left:851.5px;width:66.0px;top:368.03px;">Tipo Tabela</span>
<span class="t c" style="left:917.5px;width:63.5px;top:368.03px;">Movimento</span>
<span class="t c" style="left:981px;width:538px;top:368.03px;">Descrição</span>
<span class="t c" style="left:1519px;width:70.29999999999995px;top:368.03px;">Período Ref.</span>
<span class="t c" style="left:1589.3px;width:67.20000000000005px;top:368.03px;">Quantidade</span>
<span class="t c" style="left:1656.5px;width:45.799999999999955px;top:368.03px;">Valor</span>
<span class="t c" style="left:1702.3px;width:47.200000000000045px;top:368.03px;">Sujeito</span>
<span class="t c" style="left:1749.5px;width:54.799999999999955px;top:368.03px;">Redução</span>
<span class="t c" style="left:1804.3px;width:337.70000000000005px;top:368.03px;">Valor Limite/Formula</span>
<div style="left:981px;top:383px;width:538px;height:19.5px;background:#faead8"></div>
<div style="left:834px;top:402px;width:1308px;height:1.5px;background:#cfd0e6"></div>
<svg style="left:842px;top:388px" width="5" height="10" viewBox="0 0 5 10"><circle cx="2.5" cy="2.5" r="2" fill="#666"/><path d="M2.5 4v6" stroke="#666" stroke-width="1"/></svg>
<div style="left:859px;top:391px;width:8px;height:1.3px;background:#7a7a7a"></div>
<div style="left:859px;top:393.3px;width:8px;height:1.3px;background:#7a7a7a"></div>
<svg style="left:922px;top:388px" width="14" height="10" viewBox="0 0 14 10"><path d="M0.5 7.2L1.6 2.2h1.2L3.9 7.2M1 5.4h2.4" fill="none" stroke="#6a6a6a" stroke-width="1.1"/><rect x="4.1" y="0" width="6.2" height="9.8" rx="0.8" fill="#239a2f"/><rect x="6" y="2.6" width="2.6" height="4.6" fill="#d5ecd5"/><path d="M14 2.7h-2.3v4.3h2.3" fill="none" stroke="#6a6a6a" stroke-width="1.3"/></svg>
<svg style="left:985.5px;top:388px" width="14" height="10" viewBox="0 0 14 10"><path d="M0.5 7.2L1.6 2.2h1.2L3.9 7.2M1 5.4h2.4" fill="none" stroke="#6a6a6a" stroke-width="1.1"/><rect x="4.1" y="0" width="6.2" height="9.8" rx="0.8" fill="#239a2f"/><rect x="6" y="2.6" width="2.6" height="4.6" fill="#d5ecd5"/><path d="M14 2.7h-2.3v4.3h2.3" fill="none" stroke="#6a6a6a" stroke-width="1.3"/></svg>
<svg style="left:1524px;top:388px" width="14" height="10" viewBox="0 0 14 10"><path d="M0.5 7.2L1.6 2.2h1.2L3.9 7.2M1 5.4h2.4" fill="none" stroke="#6a6a6a" stroke-width="1.1"/><rect x="4.1" y="0" width="6.2" height="9.8" rx="0.8" fill="#239a2f"/><rect x="6" y="2.6" width="2.6" height="4.6" fill="#d5ecd5"/><path d="M14 2.7h-2.3v4.3h2.3" fill="none" stroke="#6a6a6a" stroke-width="1.3"/></svg>
<div style="left:1597px;top:391px;width:8px;height:1.3px;background:#7a7a7a"></div>
<div style="left:1597px;top:393.3px;width:8px;height:1.3px;background:#7a7a7a"></div>
<div style="left:1664px;top:391px;width:8px;height:1.3px;background:#7a7a7a"></div>
<div style="left:1664px;top:393.3px;width:8px;height:1.3px;background:#7a7a7a"></div>
<div style="left:1710px;top:391px;width:8px;height:1.3px;background:#7a7a7a"></div>
<div style="left:1710px;top:393.3px;width:8px;height:1.3px;background:#7a7a7a"></div>
<div style="left:1757px;top:391px;width:8px;height:1.3px;background:#7a7a7a"></div>
<div style="left:1757px;top:393.3px;width:8px;height:1.3px;background:#7a7a7a"></div>
<svg style="left:1810px;top:388px" width="14" height="10" viewBox="0 0 14 10"><path d="M0.5 7.2L1.6 2.2h1.2L3.9 7.2M1 5.4h2.4" fill="none" stroke="#6a6a6a" stroke-width="1.1"/><rect x="4.1" y="0" width="6.2" height="9.8" rx="0.8" fill="#239a2f"/><rect x="6" y="2.6" width="2.6" height="4.6" fill="#d5ecd5"/><path d="M14 2.7h-2.3v4.3h2.3" fill="none" stroke="#6a6a6a" stroke-width="1.3"/></svg>
<div style="left:981px;top:402.8px;width:538px;height:191.5px;background:#faead8"></div>
<div style="left:851.5px;top:594.3px;width:1290.5px;height:19.15px;background:#dfdff7"></div>
<div style="left:981px;top:594.3px;width:538px;height:19.15px;background:#e6dde7;border:1px dotted #555"></div>
<div style="left:852px;top:422px;width:1290px;height:1px;background:#cdcee6"></div>
<div style="left:981px;top:422px;width:538px;height:1px;background:#e0ddd8"></div>
<div style="left:852px;top:441px;width:1290px;height:1px;background:#cdcee6"></div>
<div style="left:981px;top:441px;width:538px;height:1px;background:#e0ddd8"></div>
<div style="left:852px;top:460px;width:1290px;height:1px;background:#cdcee6"></div>
<div style="left:981px;top:460px;width:538px;height:1px;background:#e0ddd8"></div>
<div style="left:852px;top:479px;width:1290px;height:1px;background:#cdcee6"></div>
<div style="left:981px;top:479px;width:538px;height:1px;background:#e0ddd8"></div>
<div style="left:852px;top:499px;width:1290px;height:1px;background:#cdcee6"></div>
<div style="left:981px;top:499px;width:538px;height:1px;background:#e0ddd8"></div>
<div style="left:852px;top:518px;width:1290px;height:1px;background:#cdcee6"></div>
<div style="left:981px;top:518px;width:538px;height:1px;background:#e0ddd8"></div>
<div style="left:852px;top:537px;width:1290px;height:1px;background:#cdcee6"></div>
<div style="left:981px;top:537px;width:538px;height:1px;background:#e0ddd8"></div>
<div style="left:852px;top:556px;width:1290px;height:1px;background:#cdcee6"></div>
<div style="left:981px;top:556px;width:538px;height:1px;background:#e0ddd8"></div>
<div style="left:852px;top:575px;width:1290px;height:1px;background:#cdcee6"></div>
<div style="left:981px;top:575px;width:538px;height:1px;background:#e0ddd8"></div>
<div style="left:852px;top:594px;width:1290px;height:1px;background:#cdcee6"></div>
<div style="left:981px;top:594px;width:538px;height:1px;background:#e0ddd8"></div>
<div style="left:852px;top:613px;width:1290px;height:1px;background:#c5c6e4"></div>
<div style="left:851px;top:364px;width:1px;height:249px;background:#d3d4e8"></div>
<div style="left:917px;top:364px;width:1px;height:249px;background:#d3d4e8"></div>
<div style="left:980px;top:364px;width:1px;height:249px;background:#d3d4e8"></div>
<div style="left:1518px;top:364px;width:1px;height:249px;background:#d3d4e8"></div>
<div style="left:1589px;top:364px;width:1px;height:249px;background:#d3d4e8"></div>
<div style="left:1656px;top:364px;width:1px;height:249px;background:#d3d4e8"></div>
<div style="left:1702px;top:364px;width:1px;height:249px;background:#d3d4e8"></div>
<div style="left:1749px;top:364px;width:1px;height:249px;background:#d3d4e8"></div>
<div style="left:1804px;top:364px;width:1px;height:249px;background:#d3d4e8"></div>
<div style="left:2141px;top:364px;width:1px;height:249px;background:#d3d4e8"></div>
<span class="t r" style="right:1228.5px;top:407.53px;">1</span>
<span class="t" style="left:921px;top:407.53px;">R01</span>
<span class="t" style="left:985px;top:407.53px;letter-spacing:-0.26px">Vencimento</span>
<span class="t" style="left:1523px;top:407.53px;">03-2025</span>
<span class="t r" style="right:490px;top:407.53px;">1,00</span>
<span class="t r" style="right:443.5px;top:407.53px;">1 825,93</span>
<span class="t r" style="right:396.5px;top:407.53px;">1 825,93</span>
<span class="t r" style="right:342px;top:407.53px;">0,00</span>
<span class="t r" style="right:1228.5px;top:426.68px;">1</span>
<span class="t" style="left:921px;top:426.68px;">R62</span>
<span class="t" style="left:985px;top:426.68px;letter-spacing:-0.26px">Subsídio Função</span>
<span class="t" style="left:1523px;top:426.68px;">03-2025</span>
<span class="t r" style="right:490px;top:426.68px;">1,00</span>
<span class="t r" style="right:443.5px;top:426.68px;">513,33</span>
<span class="t r" style="right:396.5px;top:426.68px;">513,33</span>
<span class="t r" style="right:342px;top:426.68px;">0,00</span>
<span class="t r" style="right:1228.5px;top:445.83px;">1</span>
<span class="t" style="left:921px;top:445.83px;">R71</span>
<span class="t" style="left:985px;top:445.83px;letter-spacing:-0.26px">Subsídio de Turno</span>
<span class="t" style="left:1523px;top:445.83px;">03-2025</span>
<span class="t r" style="right:490px;top:445.83px;">1,00</span>
<span class="t r" style="right:443.5px;top:445.83px;">173,46</span>
<span class="t r" style="right:396.5px;top:445.83px;">173,46</span>
<span class="t r" style="right:342px;top:445.83px;">0,00</span>
<span class="t r" style="right:1228.5px;top:464.98px;">1</span>
<span class="t" style="left:921px;top:464.98px;">R72</span>
<span class="t" style="left:985px;top:464.98px;letter-spacing:-0.26px">Subsídio de Prevenção</span>
<span class="t" style="left:1523px;top:464.98px;">03-2025</span>
<span class="t r" style="right:490px;top:464.98px;">1,00</span>
<span class="t r" style="right:443.5px;top:464.98px;">273,89</span>
<span class="t r" style="right:396.5px;top:464.98px;">273,89</span>
<span class="t r" style="right:342px;top:464.98px;">0,00</span>
<span class="t r" style="right:1228.5px;top:484.13px;">1</span>
<span class="t" style="left:921px;top:484.13px;">R99</span>
<span class="t" style="left:985px;top:484.13px;letter-spacing:-0.26px">Subsídio Alimentação - Cartão Refeição</span>
<span class="t" style="left:1523px;top:484.13px;">03-2025</span>
<span class="t r" style="right:490px;top:484.13px;">22,00</span>
<span class="t r" style="right:443.5px;top:484.13px;">224,40</span>
<span class="t r" style="right:396.5px;top:484.13px;">0,00</span>
<span class="t r" style="right:342px;top:484.13px;">0,00</span>
<span class="t r" style="right:1228.5px;top:503.28px;">2</span>
<span class="t" style="left:921px;top:503.28px;">H06</span>
<span class="t" style="left:985px;top:503.28px;letter-spacing:-0.26px">Trab Feriado (acrésc 50%)</span>
<span class="t" style="left:1523px;top:503.28px;">03-2025</span>
<span class="t r" style="right:490px;top:503.28px;">7,33</span>
<span class="t r" style="right:443.5px;top:503.28px;">58,90</span>
<span class="t r" style="right:396.5px;top:503.28px;">58,90</span>
<span class="t r" style="right:342px;top:503.28px;">0,00</span>
<span class="t r" style="right:1228.5px;top:522.43px;">2</span>
<span class="t" style="left:921px;top:522.43px;">H06</span>
<span class="t" style="left:985px;top:522.43px;letter-spacing:-0.26px">Trab Feriado (acrésc 50%)</span>
<span class="t" style="left:1523px;top:522.43px;">03-2025</span>
<span class="t r" style="right:490px;top:522.43px;">7,72</span>
<span class="t r" style="right:443.5px;top:522.43px;">62,03</span>
<span class="t r" style="right:396.5px;top:522.43px;">62,03</span>
<span class="t r" style="right:342px;top:522.43px;">0,00</span>
<span class="t r" style="right:1228.5px;top:541.58px;">2</span>
<span class="t" style="left:921px;top:541.58px;">H06</span>
<span class="t" style="left:985px;top:541.58px;letter-spacing:-0.26px">Trab Feriado (acrésc 50%)</span>
<span class="t" style="left:1523px;top:541.58px;">03-2025</span>
<span class="t r" style="right:490px;top:541.58px;">8,27</span>
<span class="t r" style="right:443.5px;top:541.58px;">66,45</span>
<span class="t r" style="right:396.5px;top:541.58px;">66,45</span>
<span class="t r" style="right:342px;top:541.58px;">0,00</span>
<span class="t r" style="right:1228.5px;top:560.73px;">2</span>
<span class="t" style="left:921px;top:560.73px;">H06</span>
<span class="t" style="left:985px;top:560.73px;letter-spacing:-0.26px">Trab Feriado (acrésc 50%)</span>
<span class="t" style="left:1523px;top:560.73px;">03-2025</span>
<span class="t r" style="right:490px;top:560.73px;">7,95</span>
<span class="t r" style="right:443.5px;top:560.73px;">63,88</span>
<span class="t r" style="right:396.5px;top:560.73px;">63,88</span>
<span class="t r" style="right:342px;top:560.73px;">0,00</span>
<span class="t r" style="right:1228.5px;top:579.88px;">2</span>
<span class="t" style="left:921px;top:579.88px;">H06</span>
<span class="t" style="left:985px;top:579.88px;letter-spacing:-0.26px">Trab Feriado (acrésc 50%)</span>
<span class="t" style="left:1523px;top:579.88px;">03-2025</span>
<span class="t r" style="right:490px;top:579.88px;">8,08</span>
<span class="t r" style="right:443.5px;top:579.88px;">64,92</span>
<span class="t r" style="right:396.5px;top:579.88px;">64,92</span>
<span class="t r" style="right:342px;top:579.88px;">0,00</span>
<svg style="left:842px;top:600.3px" width="5" height="8" viewBox="0 0 5 8"><path d="M0.5 0.5L4.5 4L0.5 7.5z" fill="#777"/></svg>
<span class="t r" style="right:1228.5px;top:598.83px;">3</span>
<span class="t" style="left:921px;top:598.83px;">D02 (Venc.)</span>
<span class="t" style="left:985px;top:598.83px;">[(ValSuj) x ((TxMarg - Red)/100)] - ParcAbat - ParcAbatArr - ParcCônjDef - [(ParcDep x nº Dep) - (ParcDepDef x nº DepDef)]</span>
<span class="t" style="left:1523px;top:598.83px;">03-2025</span>
<span class="t" style="left:1808.5px;top:598.83px;letter-spacing:-0.03px">[(2786.61 - 0 ) x ((38.72 - 0)/100)] - 465.03 - 0 - 0 - (1 x 21.43) - (0 x 63.84)</span>
<div style="left:834px;top:630px;width:1309px;height:29.5px;background:#ebebef;border-top:1px solid #dcdce4"></div>
<div style="left:834px;top:659.5px;width:1309px;height:19px;background:#f0f0f0;border-top:1.5px solid #c8c8d0"></div>
<span class="t" style="left:842px;top:664.53px;font-size:10.7px;letter-spacing:-0.1px">11 / 11 registo(s).</span>
<div style="left:931.5px;top:661px;width:1px;height:17px;background:#d0d0d8"></div>
<div style="left:949.5px;top:661px;width:1px;height:17px;background:#d0d0d8"></div>
<div style="left:894px;top:492px;width:807px;height:103.5px;background:rgb(228,245,0);mix-blend-mode:multiply"></div>
<div style="left:1702.3px;top:397px;width:47.4px;height:199px;background:rgb(228,245,0);mix-blend-mode:multiply"></div>
<div style="left:1813px;top:590px;width:40px;height:22px;background:rgb(228,245,0);mix-blend-mode:multiply"></div>
<svg style="left:800px;top:560px" width="80" height="22" viewBox="0 0 80 22"><path d="M8.5 10L57 12.2" stroke="#f03a3a" stroke-width="3.6" stroke-linecap="round"/><path d="M56 6.6L67.5 12.5L56 18z" fill="#f03a3a"/></svg>
<svg style="left:1750px;top:572px" width="60" height="40" viewBox="0 0 60 40"><path d="M10 9L42 25" stroke="#ee3838" stroke-width="3.2" stroke-linecap="round"/><path d="M44 20L52 30.7L38.5 30.7z" fill="#ee3838"/></svg></body></html>
